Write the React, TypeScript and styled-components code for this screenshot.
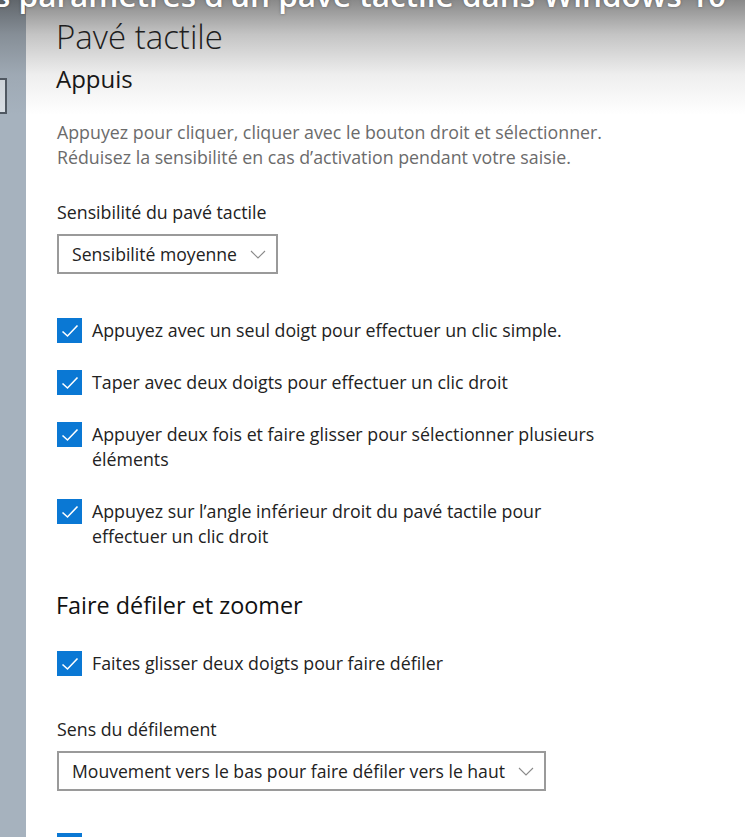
import React from "react";
import styled, { createGlobalStyle } from "styled-components";

const GlobalStyle = createGlobalStyle`
  html, body { margin: 0; padding: 0; background: #ffffff; }
  body { font-family: "Open Sans", "Noto Sans", sans-serif; }
`;

const Frame = styled.div`
  position: relative;
  width: 745px;
  height: 837px;
  overflow: hidden;
  display: flex;
  background: #ffffff;
`;

const Sidebar = styled.div`
  flex: none;
  width: 26px;
  background: #a6b2be;
  display: flex;
  flex-direction: column;
`;

const SearchEdge = styled.div`
  margin-top: 78px;
  width: 5px;
  height: 32px;
  border: 2px solid #4f5862;
  border-left: none;
  background: #d9dfe5;
`;

const Content = styled.main`
  flex: 1;
  padding: 16px 0 0 30px;
  color: #1b1b1b;
`;

const PageTitle = styled.h1`
  margin: 0;
  font-weight: 300;
  font-size: 33px;
  line-height: 42px;
  color: #111;
`;

const SectionTitle = styled.h2<{ $top: number; $size: number }>`
  margin: ${(p) => p.$top}px 0 0;
  font-weight: 400;
  font-size: ${(p) => p.$size}px;
  line-height: 30px;
  color: #111;
`;

const Description = styled.p`
  margin: 26px 0 0 1px;
  font-size: 17.8px;
  line-height: 25px;
  color: #6b6b6b;
`;

const FieldLabel = styled.div<{ $top: number }>`
  margin: ${(p) => p.$top}px 0 0 1px;
  font-size: 17.8px;
  line-height: 22px;
  color: #222;
`;

const SelectBlock = styled.div`
  display: block;
  margin-top: 11px;
`;

const Select = styled.div`
  margin-left: 1px;
  display: inline-flex;
  align-items: center;
  gap: 13px;
  height: 40px;
  box-sizing: border-box;
  padding: 0 10px 0 13px;
  border: 2px solid #9a9a9a;
  font-size: 17.6px;
  color: #222;
`;

const Chevron = () => (
  <svg width="16" height="9" viewBox="0 0 16 9" aria-hidden="true">
    <path d="M1 1 L8 8 L15 1" fill="none" stroke="#8a8a8a" strokeWidth="1.1" />
  </svg>
);

const CheckList = styled.div<{ $top: number }>`
  margin: ${(p) => p.$top}px 0 0 1px;
  display: flex;
  flex-direction: column;
  gap: 27px;
`;

const CheckRow = styled.label`
  display: flex;
  align-items: flex-start;
  gap: 10px;
`;

const Box = styled.span`
  flex: none;
  width: 25px;
  height: 25px;
  background: #0a78d4;
  display: flex;
  align-items: center;
  justify-content: center;
`;

const CheckLabel = styled.span`
  font-size: 17.8px;
  line-height: 25px;
  color: #222;
`;

const Tick = () => (
  <svg width="18" height="14" viewBox="0 0 18 14" aria-hidden="true">
    <path d="M1.5 7.5 L6.5 12 L16.5 1.5" fill="none" stroke="#ffffff" strokeWidth="1.6" />
  </svg>
);

const Shade = styled.div`
  position: absolute;
  top: 0;
  left: 0;
  right: 0;
  height: 115px;
  pointer-events: none;
  background: linear-gradient(
    to bottom,
    rgba(40, 40, 40, 0.55) 0%,
    rgba(60, 60, 60, 0.3) 30%,
    rgba(90, 90, 90, 0.1) 65%,
    rgba(255, 255, 255, 0) 100%
  );
`;

const VideoTitle = styled.div`
  position: absolute;
  top: -25px;
  right: 19px;
  white-space: nowrap;
  font-family: "Open Sans", sans-serif;
  font-weight: 600;
  font-size: 31.5px;
  line-height: 40px;
  color: #ffffff;
  text-shadow: 0 0 3px rgba(0, 0, 0, 0.35);
  pointer-events: none;
`;

const Check = ({ children }: { children: React.ReactNode }) => (
  <CheckRow>
    <Box>
      <Tick />
    </Box>
    <CheckLabel>{children}</CheckLabel>
  </CheckRow>
);

export default function App() {
  return (
    <>
      <GlobalStyle />
      <Frame>
        <Sidebar>
          <SearchEdge />
        </Sidebar>
        <Content>
          <PageTitle>Pavé tactile</PageTitle>
          <SectionTitle $top={6} $size={24}>Appuis</SectionTitle>
          <Description>
            Appuyez pour cliquer, cliquer avec le bouton droit et sélectionner.
            <br />
            Réduisez la sensibilité en cas d’activation pendant votre saisie.
          </Description>
          <FieldLabel $top={31}>Sensibilité du pavé tactile</FieldLabel>
          <SelectBlock>
            <Select>
              Sensibilité moyenne <Chevron />
            </Select>
          </SelectBlock>
          <CheckList $top={44}>
            <Check>Appuyez avec un seul doigt pour effectuer un clic simple.</Check>
            <Check>Taper avec deux doigts pour effectuer un clic droit</Check>
            <Check>
              Appuyer deux fois et faire glisser pour sélectionner plusieurs
              <br />
              éléments
            </Check>
            <Check>
              Appuyez sur l’angle inférieur droit du pavé tactile pour
              <br />
              effectuer un clic droit
            </Check>
          </CheckList>
          <SectionTitle $top={41} $size={23.4}>Faire défiler et zoomer</SectionTitle>
          <CheckList $top={31}>
            <Check>Faites glisser deux doigts pour faire défiler</Check>
          </CheckList>
          <FieldLabel $top={42}>Sens du défilement</FieldLabel>
          <SelectBlock>
            <Select>
              Mouvement vers le bas pour faire défiler vers le haut <Chevron />
            </Select>
          </SelectBlock>
          <CheckList $top={42}>
            <Check>Pincer pour zoomer</Check>
          </CheckList>
        </Content>
        <Shade />
        <VideoTitle>Les paramètres d’un pavé tactile dans Windows 10</VideoTitle>
      </Frame>
    </>
  );
}
